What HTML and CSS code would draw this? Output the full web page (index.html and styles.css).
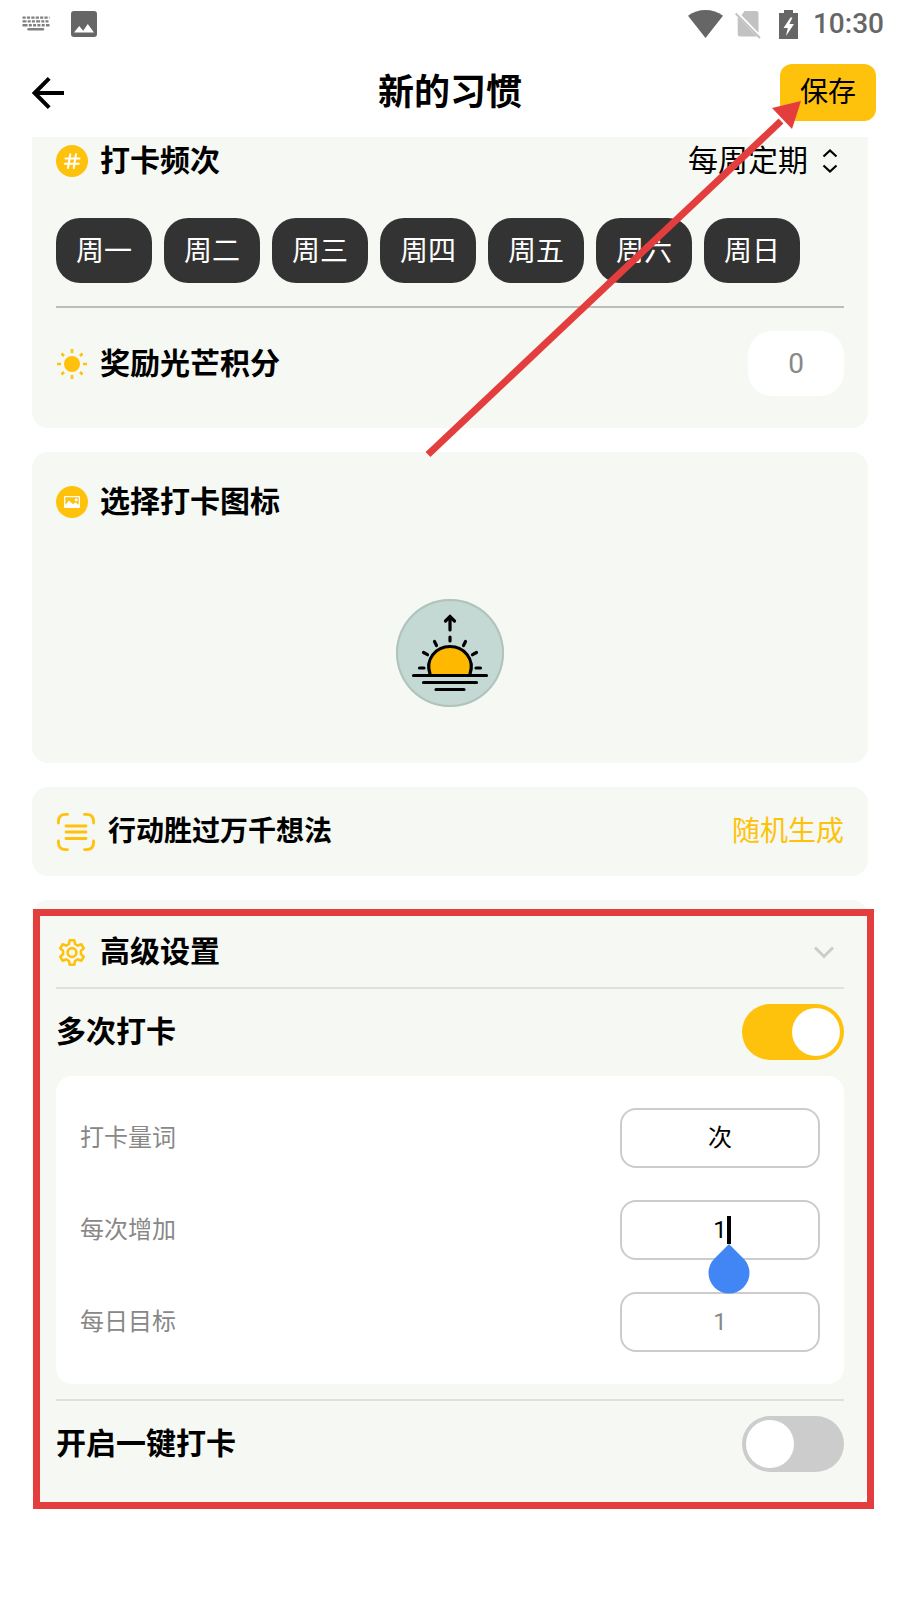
FILE: index.html
```html
<!DOCTYPE html>
<html lang="zh-CN">
<head>
<meta charset="utf-8">
<meta name="viewport" content="width=device-width, initial-scale=1">
<title>新的习惯</title>
<link rel="stylesheet" href="styles.css">
</head>
<body>
<div class="page">
  <div class="status">
    <div class="status-group status-left">
      <svg width="28" height="16" viewBox="0 0 28 16" fill="none" stroke="#808080" stroke-width="2.4" aria-hidden="true">
        <path d="M.5 1.600H27.500" stroke-dasharray="3.200 1.200"/>
        <path d="M.5 5.400H27.500" stroke-dasharray="4 1.200 3 1.200 3 1.200"/>
        <path d="M.5 9.200H27.500" stroke-dasharray="5 1.300 3 1.300 3 1.300 3 1.300 3 1.300 5"/>
        <path d="M6.500 13.200H21" stroke-linecap="round"/>
      </svg>
      <svg width="26" height="26" viewBox="0 0 26 26" aria-hidden="true">
        <rect width="26" height="26" rx="3" fill="#666"/>
        <path d="M3 21.500 8.200 15l4 4.700L16.800 13 23 21.500z" fill="#fff"/>
      </svg>
    </div>
    <div class="status-group status-right">
      <svg width="35" height="28" viewBox="0 0 35 28" fill="#666" aria-hidden="true"><path d="M0 5.800C10-1.900 25-1.900 35 5.800L17.500 28z"/></svg>
      <svg width="32" height="30" viewBox="0 0 32 30" aria-hidden="true">
        <path d="M9.500 2H21.200Q23.500 2 23.500 4.300V23.800L6.500 6.300zM2.700 8 22 27.500H5Q2.700 27.500 2.700 25.200z" fill="#c2c2c2"/>
        <path d="M.7 4.500 25 29" stroke="#c2c2c2" stroke-width="2"/>
      </svg>
      <svg width="19" height="29" viewBox="0 0 19 29" aria-hidden="true">
        <path d="M5 0h9v3h5v26H0V3h5z" fill="#666"/>
        <path d="M11.500 7.500 4.500 18h4.300L7 26 15 14h-4.600L13.500 7.500z" fill="#fff"/>
      </svg>
      <span class="clock">10:30</span>
    </div>
  </div>

  <header class="header">
    <button class="back" type="button" aria-label="返回">
      <svg width="32" height="32" viewBox="0 0 32 32" fill="none" stroke="#000" stroke-width="4" aria-hidden="true"><path d="M32 16H3M17.200 1.400 2.600 16l14.600 14.600"/></svg>
    </button>
    <h1 class="title">新的习惯</h1>
    <button class="save" type="button">保存</button>
  </header>

  <main class="content">
    <section class="card card-frequency">
      <div class="row row-frequency">
        <label class="heading" for="frequency">
          <svg class="icon" viewBox="0 0 32 32" aria-hidden="true"><circle cx="16" cy="16" r="16" fill="#fec20c"/><path d="M14.300 9.200 12 23M20 9.200 17.700 23M9.500 13.500H23.500M8.800 18.800H22.800" fill="none" stroke="#fff" stroke-width="2" stroke-linecap="round"/></svg>
          打卡频次
        </label>
        <div class="picker">
          <select id="frequency"><option>每周定期</option></select>
          <svg width="28" height="28" viewBox="0 0 28 28" fill="none" stroke="#000" stroke-width="2.200" aria-hidden="true"><path d="M7.500 9.500 14 3.500 20.500 9.500M7.500 18.500 14 24.500 20.500 18.500"/></svg>
        </div>
      </div>
      <div class="days">
        <button type="button" class="day">周一</button>
        <button type="button" class="day">周二</button>
        <button type="button" class="day">周三</button>
        <button type="button" class="day">周四</button>
        <button type="button" class="day">周五</button>
        <button type="button" class="day">周六</button>
        <button type="button" class="day">周日</button>
      </div>
      <hr class="line line-dark">
      <div class="row">
        <label class="heading" for="points">
          <svg class="icon" viewBox="0 0 32 32" aria-hidden="true"><circle cx="16" cy="16" r="8" fill="#fec20c"/><path d="M16 1V5M16 27v4M1 16H5M27 16h4M5.500 5.500 8 8M24 24l2.500 2.500M26.500 5.500 24 8M8 24 5.500 26.500" stroke="#fec20c" stroke-width="2.600"/></svg>
          奖励光芒积分
        </label>
        <input class="points" id="points" type="text" inputmode="numeric" placeholder="0">
      </div>
    </section>

    <section class="card card-icon">
      <h2 class="heading">
        <svg class="icon" viewBox="0 0 32 32" aria-hidden="true"><circle cx="16" cy="16" r="16" fill="#fec20c"/><rect x="8" y="10" width="16" height="12" rx="1" fill="#fff"/><path d="M9.300 19V11.300H22.700V19L19.500 16.300l-2.500 2L13 14.500z" fill="#fec20c"/><circle cx="20.200" cy="13.700" r="1.500" fill="#fff"/></svg>
        选择打卡图标
      </h2>
      <button class="emblem" type="button" aria-label="日出图标">
        <svg viewBox="0 0 108 108" fill="none" stroke="#000" stroke-width="3.200" stroke-linecap="round" aria-hidden="true">
          <path d="M33.500 76C29 60 40 47.500 54 47.500S79 60 74.500 76z" fill="#ffb800" stroke="none"/>
          <path d="M34 75C29 60 40 47.500 54 47.500S79 60 74 75"/>
          <path d="M17.500 76.500H90.500M27.500 83.500H80.500M40 90.500H68"/>
          <path d="M54 31V18M49.500 22 54 17.500 58.500 22M54 38v4M38.500 42.500l2 4M69.500 42.500l-2 4M27.500 53.500l4 2.200M80.500 53.500l-4 2.200M23.500 69H28M80 69h4.500"/>
        </svg>
      </button>
    </section>

    <section class="card card-motto row">
      <h2 class="heading heading-small">
        <svg class="icon-large" viewBox="0 0 40 40" fill="none" stroke="#fec20c" stroke-width="2.800" stroke-linecap="round" aria-hidden="true"><path d="M2.400 11V9.500Q2.400 2.400 9.500 2.400H11.500M28.500 2.400h2Q37.600 2.400 37.600 9.500V11M37.600 29v1.500q0 7.100-7.100 7.100h-2M11.500 37.600h-2Q2.400 37.600 2.400 30.500V29M10 14H30M10 20H30M10 26.500H30"/></svg>
        行动胜过万千想法
      </h2>
      <button class="random" type="button">随机生成</button>
    </section>

    <section class="card card-advanced">
      <div class="row row-advanced">
        <h2 class="heading">
          <svg class="icon" viewBox="0 0 32 32" fill="none" stroke="#fec20c" stroke-width="2.600" stroke-linejoin="round" aria-hidden="true"><path d="M13.700 4.200h4.600l.8 3.800 2.700 1.600 3.700-1.300 2.300 4-2.900 2.600v3.200l2.900 2.600-2.300 4-3.700-1.300-2.700 1.600-.8 3.800h-4.600l-.8-3.800-2.700-1.600-3.700 1.300-2.300-4 2.900-2.600v-3.200l-2.900-2.600 2.300-4 3.700 1.300 2.700-1.600z"/><circle cx="16" cy="16.500" r="4.400"/></svg>
          高级设置
        </h2>
        <button class="collapse" type="button" aria-label="收起高级设置">
          <svg width="40" height="40" viewBox="0 0 40 40" fill="none" stroke="#ccc" stroke-width="3" aria-hidden="true"><path d="M11 15.500 20 24.500l9-9"/></svg>
        </button>
      </div>
      <hr class="line">
      <div class="row">
        <label class="heading" for="multi">多次打卡</label>
        <input class="switch" id="multi" type="checkbox" role="switch" checked>
      </div>
      <div class="panel">
        <div class="row">
          <label class="label" for="unit">打卡量词</label>
          <div class="field"><input class="field-text" id="unit" type="text" value="次"></div>
        </div>
        <div class="row">
          <label class="label" for="step">每次增加</label>
          <div class="field">
            <input id="step" type="text" inputmode="numeric" value="1">
            <span class="caret"></span>
            <svg class="handle" viewBox="0 0 42 50" aria-hidden="true"><path d="M21 0 35.500 14.500A20.500 20.500 0 1 1 6.500 14.500z" fill="#4285f4"/></svg>
          </div>
        </div>
        <div class="row">
          <label class="label" for="goal">每日目标</label>
          <div class="field"><input id="goal" type="text" inputmode="numeric" placeholder="1"></div>
        </div>
      </div>
      <hr class="line">
      <div class="row">
        <label class="heading" for="quick">开启一键打卡</label>
        <input class="switch" id="quick" type="checkbox" role="switch">
      </div>
      <div class="frame"></div>
    </section>
  </main>

  <svg class="arrow" viewBox="0 0 480 460" aria-hidden="true"><path d="M8 454.500 361 121" stroke="#e43d3e" stroke-width="7"/><path d="M381 101 352 108 372 129z" fill="#e43d3e"/></svg>
</div>
</body>
</html>
```

FILE: styles.css
```css
* {
  box-sizing: border-box;
}

body {
  margin: 0;
  background: #fff;
  color: #000;
  font-family: Roboto, "Noto Sans CJK SC", sans-serif;
}

button,
input,
select {
  margin: 0;
  padding: 0;
  border: 0;
  background: none;
  color: inherit;
  font: inherit;
  appearance: none;
}

svg {
  display: block;
  flex: none;
}

.page {
  position: relative;
  min-height: 100vh;
  overflow: hidden;
}

.status {
  display: flex;
  justify-content: space-between;
  height: 48px;
  padding: 0 16px 0 22px;
}

.status-group {
  display: flex;
  align-items: center;
}

.status-left {
  gap: 21px;
}

.status-right {
  gap: 12px;
}

.clock {
  padding-left: 3px;
  color: #666;
  font-size: 28px;
  font-weight: 500;
  line-height: 52px;
}

.header {
  display: grid;
  grid-template-columns: 1fr auto 1fr;
  align-items: center;
  padding: 16px 24px;
}

.back {
  justify-self: start;
  padding: 8px;
}

.title {
  margin: 0;
  font-size: 36px;
  font-weight: 700;
  line-height: 48px;
}

.save {
  justify-self: end;
  padding: 0 20px;
  border-radius: 12px;
  background: #fec20c;
  font-size: 28px;
  line-height: 57px;
}

.content {
  display: flex;
  flex-direction: column;
  gap: 24px;
  padding: 0 32px 96px;
}

.card {
  padding: 24px;
  border-radius: 16px;
  background: #f6f8f3;
}

.row {
  display: flex;
  align-items: center;
  justify-content: space-between;
}

.heading {
  display: flex;
  align-items: center;
  gap: 12px;
  margin: 0;
  font-size: 30px;
  font-weight: 700;
  line-height: 40px;
}

.heading-small {
  font-size: 28px;
}

.icon {
  width: 32px;
  height: 32px;
}

.icon-large {
  width: 40px;
  height: 40px;
}

.line {
  width: 100%;
  height: 2px;
  margin: 15px 0;
  border: 0;
  background: #dfe1dd;
}

.line-dark {
  margin: 23px 0;
  background: #bcbeba;
}

.card-frequency {
  padding: 0 24px 32px;
  border-radius: 0 0 16px 16px;
}

.row-frequency {
  height: 48px;
  margin-bottom: 33px;
}

.picker {
  display: flex;
  align-items: center;
  gap: 8px;
  font-size: 30px;
  line-height: 40px;
}

.days {
  display: flex;
  flex-wrap: wrap;
  gap: 12px;
}

.day,
.points {
  width: 96px;
  height: 65px;
  border-radius: 24px;
  font-size: 28px;
  text-align: center;
}

.day {
  padding-bottom: 4px;
  background: #333;
  color: #fff;
}

.points {
  background: #fff;
}

input::placeholder {
  color: #888;
  opacity: 1;
}

.card-icon {
  padding: 30px 24px 56px;
}

.emblem {
  display: block;
  width: 108px;
  height: 108px;
  margin: 77px auto 0;
  border-radius: 50%;
  background: #c5d9d4;
  box-shadow: inset 0 0 0 2px #b0c4bd;
}

.random {
  color: #fec20c;
  font-size: 28px;
  line-height: 41px;
}

.card-advanced {
  position: relative;
  padding: 32px 24px;
}

.switch {
  width: 102px;
  height: 56px;
  padding: 4px;
  border-radius: 28px;
  background: #ccc;
}

.switch::before {
  content: "";
  display: block;
  width: 48px;
  height: 48px;
  border-radius: 50%;
  background: #fff;
}

.switch:checked {
  background: #fec20c;
}

.switch:checked::before {
  margin-left: auto;
}

.panel {
  display: flex;
  flex-direction: column;
  gap: 32px;
  margin-top: 16px;
  padding: 32px 24px;
  border-radius: 16px;
  background: #fff;
  font-size: 24px;
}

.label {
  padding-bottom: 6px;
  color: #888;
}

.field {
  position: relative;
  width: 200px;
}

.field input {
  display: block;
  width: 100%;
  height: 60px;
  border: 2px solid #ccc;
  border-radius: 16px;
  text-align: center;
}

.field .field-text {
  padding-bottom: 6px;
}

.caret {
  position: absolute;
  top: 16px;
  left: 107px;
  width: 4px;
  height: 28px;
  background: #000;
}

.handle {
  position: absolute;
  z-index: 1;
  top: 44px;
  left: 88px;
  width: 42px;
  height: 50px;
}

.frame {
  position: absolute;
  top: 9px;
  right: -6px;
  bottom: -5px;
  left: 1px;
  border: 7px solid #e43d3e;
  pointer-events: none;
}

.arrow {
  position: absolute;
  top: 0;
  right: 0;
  width: 480px;
  height: 460px;
  pointer-events: none;
}
```
